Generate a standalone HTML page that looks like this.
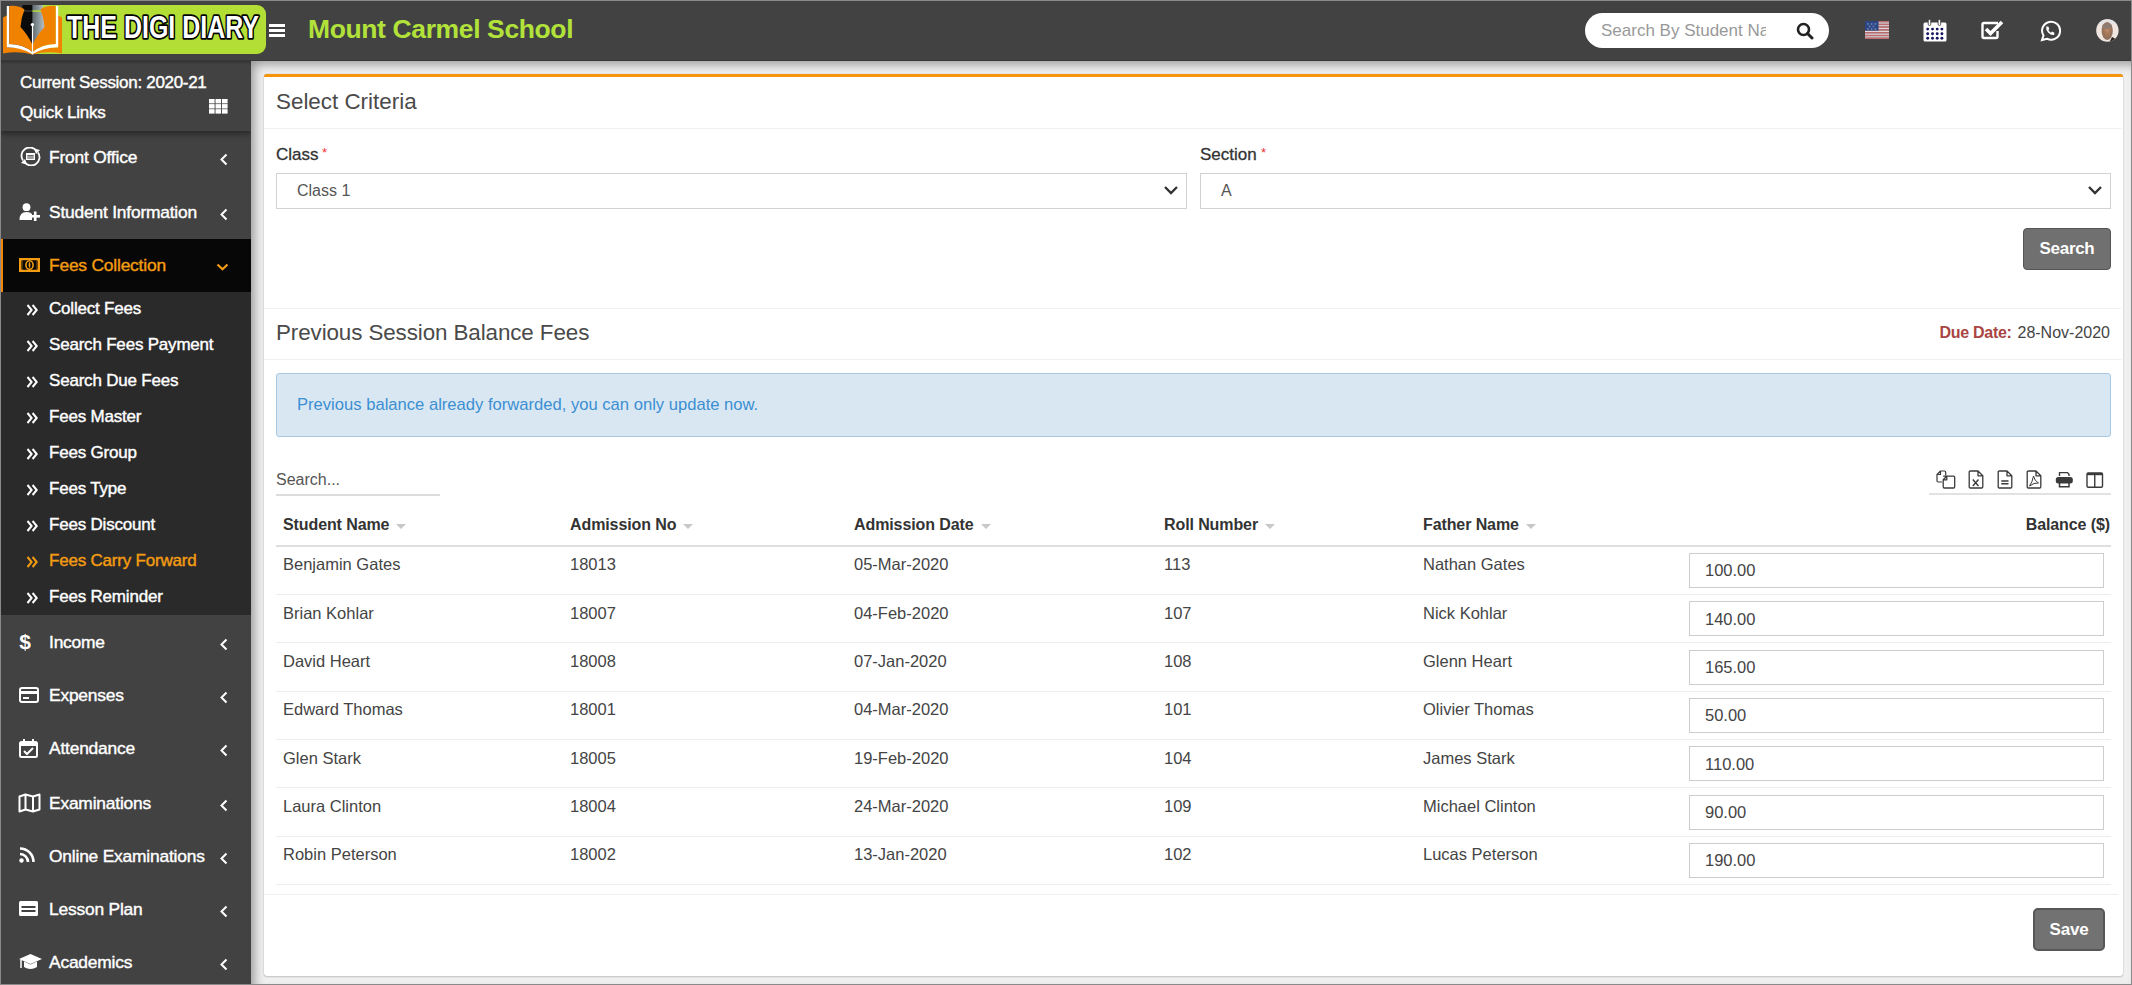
<!DOCTYPE html>
<html><head><meta charset="utf-8">
<style>
*{box-sizing:border-box;margin:0;padding:0}
html,body{width:2132px;height:985px;overflow:hidden}
body{font-family:"Liberation Sans",sans-serif;background:#f0f0f0;position:relative;color:#444}
#frame{position:absolute;left:0;top:0;width:2132px;height:985px;border:1px solid #8a8a8a;pointer-events:none;z-index:100}
#hdr{position:absolute;left:0;top:0;width:2132px;height:61px;background:#424242;border-bottom:1px solid #383838}
#side{position:absolute;left:0;top:61px;width:251px;height:924px;background:#424242;overflow:hidden}
#content{position:absolute;left:251px;top:61px;width:1881px;height:924px;background:#f0f0f0;box-shadow:inset 5px 5px 11px -2px rgba(0,0,0,.38)}
.box{position:absolute;left:264px;top:74px;width:1859px;height:902px;background:#fff;border-top:3px solid #f7960a;border-radius:3px;box-shadow:0 0 1px rgba(0,0,0,.28),0 1px 2px rgba(0,0,0,.18)}
.t{position:absolute;white-space:nowrap;line-height:1}
svg{position:absolute;display:block}
/* sidebar */
.si{position:absolute;left:0;width:251px;color:#fff;font-size:17px}
.si .lb{position:absolute;left:49px;top:50%;transform:translateY(-50%);white-space:nowrap;letter-spacing:-0.2px}
.si .chev{position:absolute;left:219px;top:50%;width:9px;height:9px;margin-top:-4px;border-left:2px solid #fff;border-bottom:2px solid #fff;transform:rotate(45deg)}
.sub{position:absolute;left:0;width:251px;color:#fff;font-size:17px}
.sub .lb{position:absolute;left:49px;top:50%;transform:translateY(-50%);white-space:nowrap;letter-spacing:-0.2px}
.sub .dc{position:absolute;left:26px;top:50%;transform:translateY(-50%);font-size:15px;font-weight:bold;letter-spacing:-2px}
/* content */
.lbl{font-size:16px;color:#333}
.req{color:#e33;font-size:12px;position:relative;top:-3px;margin-left:3px}
.sel{position:absolute;height:36px;border:1px solid #d2d6de;background:#fff}
.sel .v{position:absolute;left:20px;top:50%;transform:translateY(-50%);font-size:16px;color:#555}
.sel .ar{position:absolute;right:12px;top:50%;width:10px;height:10px;margin-top:-8px;border-right:2px solid #333;border-bottom:2px solid #333;transform:rotate(45deg)}
.btn{position:absolute;background:#6d6d6d;border:1px solid #555;border-radius:3px;color:#fff;font-size:17px;font-weight:bold;text-align:center}
.th{position:absolute;top:524px;transform:translateY(-50%);font-size:16px;font-weight:bold;color:#333;white-space:nowrap}
.th i{display:inline-block;width:0;height:0;border-left:5px solid transparent;border-right:5px solid transparent;border-top:5px solid #ccc;margin-left:6px;vertical-align:middle;position:relative;top:1px}
.td{position:absolute;transform:translateY(-50%);font-size:16px;color:#444;white-space:nowrap}
.inp{position:absolute;left:1689px;width:415px;height:36px;border:1px solid #cfcfcf;background:#fff}
.inp span{position:absolute;left:16px;top:50%;transform:translateY(-50%);font-size:16px;color:#444}
.hl{position:absolute;height:1px;background:#f0f0f0}
.sa{display:inline-block;width:0;height:0;border-left:5px solid transparent;border-right:5px solid transparent;border-top:5px solid #c8c8c8;margin-left:7px;vertical-align:middle;position:relative;top:1px}
</style></head>
<body>

<div id="hdr">
  <!-- logo -->
  <div style="position:absolute;left:33px;top:5px;width:233px;height:49px;background:#b2de36;border-radius:0 9px 9px 0"></div>
  <svg style="left:0;top:0" width="64" height="58" viewBox="0 0 64 58">
    <defs><linearGradient id="ng" x1="0" x2="1"><stop offset="0" stop-color="#5f6a6e"/><stop offset="1" stop-color="#b9c6cc"/></linearGradient></defs>
    <path d="M22.5 5 L32.5 5 L32.5 45 L20 27 Z" fill="#0b0b0b"/>
    <path d="M32.5 5 L42.5 5 L45 27 L32.5 45 Z" fill="url(#ng)"/>
    <rect x="22.5" y="10.3" width="10" height="1.3" fill="#3a3a3a"/>
    <rect x="32.5" y="10.3" width="10" height="1.5" fill="#b2de36"/>
    <path d="M3 17.5 L7.5 15 L7.5 47.5 Q21 46.5 32.3 53.5 L32.3 54.5 Q18 50.5 3 53.5 Z" fill="#f08200"/>
    <path d="M6.8 6 L9.3 6 L9.3 44 Q23 44 32.3 52 L32.3 54 Q21 47.2 6.8 47.2 Z" fill="#fff"/>
    <path d="M9.3 6 Q18.5 5 24.5 9.5 Q21 18 20.5 27 Q28 35 32.3 44.5 L32.3 52 Q23 44 9.3 44 Z" fill="#f08200"/>
    <path d="M62 17.5 L57.5 15 L57.5 47.5 Q44 46.5 32.7 53.5 L32.7 54.5 Q47 50.5 62 53.5 Z" fill="#f08200"/>
    <path d="M58.2 6 L55.7 6 L55.7 44 Q42 44 32.7 52 L32.7 54 Q44 47.2 58.2 47.2 Z" fill="#fff"/>
    <path d="M55.7 6 Q46.5 5 40.5 9.5 Q44 18 44.5 27 Q37 35 32.7 44.5 L32.7 52 Q42 44 55.7 44 Z" fill="#f08200"/>
    <rect x="31.9" y="25" width="1.2" height="29.5" fill="#fff"/>
    <circle cx="32.4" cy="24.6" r="1.7" fill="#fff"/>
  </svg>
  <svg style="left:60px;top:8px" width="206" height="40" viewBox="0 0 206 40"><text x="7" y="30" font-family="Liberation Sans" font-weight="bold" font-size="31.5" textLength="192" lengthAdjust="spacingAndGlyphs" fill="#fff" stroke="#000" stroke-width="3.6" stroke-linejoin="round" paint-order="stroke">THE DIGI DIARY</text></svg>
  <!-- hamburger -->
  <div style="position:absolute;left:269px;top:24px;width:16px;height:3px;background:#fff"></div>
  <div style="position:absolute;left:269px;top:29px;width:16px;height:3px;background:#fff"></div>
  <div style="position:absolute;left:269px;top:34px;width:16px;height:3px;background:#fff"></div>
  <div class="t" style="left:308px;top:16px;font-size:26.5px;font-weight:bold;color:#b2e23a;letter-spacing:-0.38px">Mount Carmel School</div>
  <!-- search -->
  <div style="position:absolute;left:1585px;top:13px;width:244px;height:35px;background:#fff;border-radius:18px"></div>
  <div class="t" style="left:1601px;top:22px;font-size:17px;color:#999;width:165px;overflow:hidden">Search By Student Name</div>
  <svg style="left:1796px;top:22px" width="18" height="18" viewBox="0 0 18 18"><circle cx="7.5" cy="7.5" r="5.5" fill="none" stroke="#222" stroke-width="2.6"/><path d="M11.5 11.5 L16 16" stroke="#222" stroke-width="3" stroke-linecap="round"/></svg>
  <!-- flag -->
  <svg style="left:1865px;top:21px" width="24" height="18" viewBox="0 0 24 18">
    <rect y="0.00" width="24" height="1.43" fill="#c46c72"/><rect y="1.38" width="24" height="1.43" fill="#e6d8da"/><rect y="2.77" width="24" height="1.43" fill="#c46c72"/><rect y="4.15" width="24" height="1.43" fill="#e6d8da"/><rect y="5.54" width="24" height="1.43" fill="#c46c72"/><rect y="6.92" width="24" height="1.43" fill="#e6d8da"/><rect y="8.31" width="24" height="1.43" fill="#c46c72"/><rect y="9.69" width="24" height="1.43" fill="#e6d8da"/><rect y="11.08" width="24" height="1.43" fill="#c46c72"/><rect y="12.46" width="24" height="1.43" fill="#e6d8da"/><rect y="13.85" width="24" height="1.43" fill="#c46c72"/><rect y="15.23" width="24" height="1.43" fill="#e6d8da"/><rect y="16.62" width="24" height="1.43" fill="#c46c72"/>
    <rect width="13.5" height="9.6" fill="#2c4684"/>
    <g fill="#6f83b4"><circle cx="3" cy="3" r="0.9"/><circle cx="6.7" cy="3" r="0.9"/><circle cx="10.4" cy="3" r="0.9"/><circle cx="4.8" cy="5.5" r="0.9"/><circle cx="8.5" cy="5.5" r="0.9"/><circle cx="3" cy="8" r="0.9"/><circle cx="6.7" cy="8" r="0.9"/><circle cx="10.4" cy="8" r="0.9"/></g>
  </svg>
  <!-- calendar -->
  <svg style="left:1923px;top:19px" width="24" height="23" viewBox="0 0 24 23">
    <rect x="0.5" y="3.5" width="23" height="19" rx="1.5" fill="#fff"/>
    <rect x="5.2" y="0.5" width="2.6" height="6" rx="1.3" fill="#fff" stroke="#424242" stroke-width="0.9"/>
    <rect x="15.1" y="0.5" width="2.6" height="6" rx="1.3" fill="#fff" stroke="#424242" stroke-width="0.9"/>
    <g fill="#141460"><circle cx="4.7" cy="10.1" r="1.45"/><circle cx="9.5" cy="10.1" r="1.45"/><circle cx="14.2" cy="10.1" r="1.45"/><circle cx="18.9" cy="10.1" r="1.45"/><circle cx="4.7" cy="14.7" r="1.45"/><circle cx="9.5" cy="14.7" r="1.45"/><circle cx="14.2" cy="14.7" r="1.45"/><circle cx="18.9" cy="14.7" r="1.45"/><circle cx="4.7" cy="19.2" r="1.45"/><circle cx="9.5" cy="19.2" r="1.45"/><circle cx="14.2" cy="19.2" r="1.45"/><circle cx="18.9" cy="19.2" r="1.45"/></g>
  </svg>
  <!-- check -->
  <svg style="left:1981px;top:19px" width="24" height="21" viewBox="0 0 24 21">
    <path d="M17 4 L3 4 Q1.5 4 1.5 5.5 L1.5 17.5 Q1.5 19 3 19 L15 19 Q16.5 19 16.5 17.5 L16.5 12" fill="none" stroke="#fff" stroke-width="2.4"/>
    <path d="M5 10 L9.5 14.5 L21 3" fill="none" stroke="#fff" stroke-width="3.6"/>
  </svg>
  <!-- whatsapp -->
  <svg style="left:2039px;top:20px" width="22" height="22" viewBox="0 0 22 22">
    <path d="M3 20 L4.5 15.5 A9 9 0 1 1 8 18.7 Z" fill="none" stroke="#fff" stroke-width="2"/>
    <path d="M7.2 6.5 Q6.5 9.5 9.3 12.7 Q12.5 15.8 15.2 14.8 L15.4 12.8 L13 11.6 L12 12.7 Q10.2 11.8 9.3 10 L10.4 9 L9.3 6.5 Z" fill="#fff"/>
  </svg>
  <!-- avatar -->
  <svg style="left:2095px;top:18px" width="25" height="25" viewBox="0 0 25 25">
    <defs><clipPath id="avc"><circle cx="12.4" cy="12.5" r="11.2"/></clipPath>
    <radialGradient id="avf" cx="0.5" cy="0.4" r="0.6"><stop offset="0" stop-color="#c08a68"/><stop offset="0.6" stop-color="#9c7458"/><stop offset="1" stop-color="#8a7060"/></radialGradient></defs>
    <g clip-path="url(#avc)">
      <rect width="25" height="25" fill="#f1e6df"/>
      <rect x="0" y="0" width="25" height="6" fill="#e4e4e4"/>
      <ellipse cx="12.2" cy="13" rx="5.6" ry="9" fill="url(#avf)"/>
      <ellipse cx="12.2" cy="8" rx="5" ry="3" fill="#8e7c70"/>
      <path d="M14 25 L17 19 Q21 20 22 25 Z" fill="#2e2622"/>
      <path d="M3 20 Q5 24 7 25 L2 25 Z" fill="#b8c4d8"/>
    </g>
  </svg>
</div>

<div id="side"><div style="position:absolute;left:0;top:0;width:251px;height:70px;background:#424242;box-shadow:0 3px 6px rgba(0,0,0,.4),inset 0 3px 3px -2px rgba(0,0,0,.35)"></div>
<div class="t" style="left:20px;top:12.7px;font-size:17px;color:#fff;font-weight:400;letter-spacing:-0.3px;-webkit-text-stroke:0.4px #fff">Current Session: 2020-21</div>
<div class="t" style="left:20px;top:42.7px;font-size:17px;color:#fff;font-weight:400;letter-spacing:-0.2px;-webkit-text-stroke:0.4px #fff">Quick Links</div>
<svg style="left:209px;top:38px" width="19" height="15" viewBox="0 0 19 15"><g fill="#fff"><rect x="0.0" y="0.0" width="5.6" height="4.4"/><rect x="6.5" y="0.0" width="5.6" height="4.4"/><rect x="13.0" y="0.0" width="5.6" height="4.4"/><rect x="0.0" y="5.1" width="5.6" height="4.4"/><rect x="6.5" y="5.1" width="5.6" height="4.4"/><rect x="13.0" y="5.1" width="5.6" height="4.4"/><rect x="0.0" y="10.2" width="5.6" height="4.4"/><rect x="6.5" y="10.2" width="5.6" height="4.4"/><rect x="13.0" y="10.2" width="5.6" height="4.4"/></g></svg>
<div class="t" style="left:49px;top:87.5px;font-size:17.4px;color:#fff;font-weight:400;letter-spacing:-0.2px;-webkit-text-stroke:0.4px #fff">Front Office</div><svg style="left:19px;top:86px" width="23" height="19" viewBox="0 0 23 19"><path d="M4 13.5 A7.5 7.5 0 0 1 17.5 4" fill="none" stroke="#fff" stroke-width="1.8"/><path d="M19 5.5 A7.5 7.5 0 0 1 5.5 15" fill="none" stroke="#fff" stroke-width="1.8"/><path d="M15 1.5 L21 3 L17 7 Z" fill="#fff"/><path d="M8 17.5 L2 16 L6 12 Z" fill="#fff"/><rect x="7" y="6" width="9" height="7" fill="#fff"/><rect x="8.3" y="8.2" width="6.4" height="1.3" fill="#424242"/><rect x="8.3" y="10.5" width="6.4" height="1" fill="#424242"/></svg><svg style="left:219px;top:92px" width="10" height="13" viewBox="0 0 10 13"><path d="M7.5 1.5 L2.5 6.5 L7.5 11.5" fill="none" stroke="#fff" stroke-width="2.0"/></svg>
<div class="t" style="left:49px;top:142.5px;font-size:17.4px;color:#fff;font-weight:400;letter-spacing:-0.2px;-webkit-text-stroke:0.4px #fff">Student Information</div><svg style="left:19px;top:142px" width="22" height="18" viewBox="0 0 22 18"><circle cx="7.5" cy="4.2" r="3.9" fill="#fff"/><path d="M0.5 17 Q0.5 9 7.5 9 Q11.5 9 13 11 L13 17 Z" fill="#fff"/><rect x="14.9" y="8.5" width="2.6" height="9.5" fill="#fff"/><rect x="11.4" y="12" width="9.6" height="2.6" fill="#fff"/><path d="M13.6 9.5 L13.6 18" stroke="#424242" stroke-width="0"/></svg><svg style="left:219px;top:147px" width="10" height="13" viewBox="0 0 10 13"><path d="M7.5 1.5 L2.5 6.5 L7.5 11.5" fill="none" stroke="#fff" stroke-width="2.0"/></svg>
<div style="position:absolute;left:0;top:178px;width:251px;height:53px;background:#070707;border-left:3px solid #f0850a"></div>
<div class="t" style="left:49px;top:195.5px;font-size:17.4px;color:#f39c12;font-weight:400;letter-spacing:-0.2px;-webkit-text-stroke:0.4px #f39c12">Fees Collection</div><svg style="left:19px;top:197px" width="21" height="14" viewBox="0 0 21 14"><rect x="0" y="0" width="21" height="14" fill="#f39c12"/><rect x="2.2" y="2.2" width="16.6" height="9.6" rx="1" fill="#070707"/><ellipse cx="10.5" cy="7" rx="3.6" ry="4.3" fill="none" stroke="#f39c12" stroke-width="1.6"/><ellipse cx="10.5" cy="7" rx="0.9" ry="3" fill="#f39c12"/><rect x="2.2" y="2.2" width="1.6" height="9.6" fill="#f39c12" opacity="0.35"/><rect x="17.2" y="2.2" width="1.6" height="9.6" fill="#f39c12" opacity="0.35"/></svg><svg style="left:216px;top:202px" width="13" height="8" viewBox="0 0 13 8"><path d="M1.5 1.5 L6.5 6.3 L11.5 1.5" fill="none" stroke="#f39c12" stroke-width="2.2"/></svg>
<div style="position:absolute;left:0;top:231px;width:251px;height:323px;background:#2a2a2a"></div>
<div class="t" style="left:49px;top:239.0px;font-size:17px;color:#fff;font-weight:400;letter-spacing:-0.2px;-webkit-text-stroke:0.4px #fff">Collect Fees</div>
<svg style="left:26px;top:243px" width="13" height="12" viewBox="0 0 13 12"><path d="M1.5 1 L5.6 6 L1.5 11 M6.6 1 L10.7 6 L6.6 11" fill="none" stroke="#fff" stroke-width="2"/></svg>
<div class="t" style="left:49px;top:275.0px;font-size:17px;color:#fff;font-weight:400;letter-spacing:-0.2px;-webkit-text-stroke:0.4px #fff">Search Fees Payment</div>
<svg style="left:26px;top:279px" width="13" height="12" viewBox="0 0 13 12"><path d="M1.5 1 L5.6 6 L1.5 11 M6.6 1 L10.7 6 L6.6 11" fill="none" stroke="#fff" stroke-width="2"/></svg>
<div class="t" style="left:49px;top:311.0px;font-size:17px;color:#fff;font-weight:400;letter-spacing:-0.2px;-webkit-text-stroke:0.4px #fff">Search Due Fees</div>
<svg style="left:26px;top:315px" width="13" height="12" viewBox="0 0 13 12"><path d="M1.5 1 L5.6 6 L1.5 11 M6.6 1 L10.7 6 L6.6 11" fill="none" stroke="#fff" stroke-width="2"/></svg>
<div class="t" style="left:49px;top:347.0px;font-size:17px;color:#fff;font-weight:400;letter-spacing:-0.2px;-webkit-text-stroke:0.4px #fff">Fees Master</div>
<svg style="left:26px;top:351px" width="13" height="12" viewBox="0 0 13 12"><path d="M1.5 1 L5.6 6 L1.5 11 M6.6 1 L10.7 6 L6.6 11" fill="none" stroke="#fff" stroke-width="2"/></svg>
<div class="t" style="left:49px;top:383.0px;font-size:17px;color:#fff;font-weight:400;letter-spacing:-0.2px;-webkit-text-stroke:0.4px #fff">Fees Group</div>
<svg style="left:26px;top:387px" width="13" height="12" viewBox="0 0 13 12"><path d="M1.5 1 L5.6 6 L1.5 11 M6.6 1 L10.7 6 L6.6 11" fill="none" stroke="#fff" stroke-width="2"/></svg>
<div class="t" style="left:49px;top:419.0px;font-size:17px;color:#fff;font-weight:400;letter-spacing:-0.2px;-webkit-text-stroke:0.4px #fff">Fees Type</div>
<svg style="left:26px;top:423px" width="13" height="12" viewBox="0 0 13 12"><path d="M1.5 1 L5.6 6 L1.5 11 M6.6 1 L10.7 6 L6.6 11" fill="none" stroke="#fff" stroke-width="2"/></svg>
<div class="t" style="left:49px;top:455.0px;font-size:17px;color:#fff;font-weight:400;letter-spacing:-0.2px;-webkit-text-stroke:0.4px #fff">Fees Discount</div>
<svg style="left:26px;top:459px" width="13" height="12" viewBox="0 0 13 12"><path d="M1.5 1 L5.6 6 L1.5 11 M6.6 1 L10.7 6 L6.6 11" fill="none" stroke="#fff" stroke-width="2"/></svg>
<div class="t" style="left:49px;top:491.0px;font-size:17px;color:#f39c12;font-weight:400;letter-spacing:-0.2px;-webkit-text-stroke:0.4px #f39c12">Fees Carry Forward</div>
<svg style="left:26px;top:495px" width="13" height="12" viewBox="0 0 13 12"><path d="M1.5 1 L5.6 6 L1.5 11 M6.6 1 L10.7 6 L6.6 11" fill="none" stroke="#f39c12" stroke-width="2"/></svg>
<div class="t" style="left:49px;top:527.0px;font-size:17px;color:#fff;font-weight:400;letter-spacing:-0.2px;-webkit-text-stroke:0.4px #fff">Fees Reminder</div>
<svg style="left:26px;top:531px" width="13" height="12" viewBox="0 0 13 12"><path d="M1.5 1 L5.6 6 L1.5 11 M6.6 1 L10.7 6 L6.6 11" fill="none" stroke="#fff" stroke-width="2"/></svg>
<div class="t" style="left:49px;top:572.5px;font-size:17.4px;color:#fff;font-weight:400;letter-spacing:-0.2px;-webkit-text-stroke:0.4px #fff">Income</div><svg style="left:19px;top:571px" width="12" height="20" viewBox="0 0 12 20"><text x="6" y="17" text-anchor="middle" font-family="Liberation Sans" font-weight="bold" font-size="21" fill="#fff">$</text></svg><svg style="left:219px;top:577px" width="10" height="13" viewBox="0 0 10 13"><path d="M7.5 1.5 L2.5 6.5 L7.5 11.5" fill="none" stroke="#fff" stroke-width="2.0"/></svg>
<div class="t" style="left:49px;top:625.5px;font-size:17.4px;color:#fff;font-weight:400;letter-spacing:-0.2px;-webkit-text-stroke:0.4px #fff">Expenses</div><svg style="left:19px;top:626px" width="20" height="16" viewBox="0 0 20 16"><rect x="1" y="1" width="18" height="14" rx="2" fill="none" stroke="#fff" stroke-width="2"/><rect x="1" y="4" width="18" height="3" fill="#fff"/><rect x="4" y="10" width="6" height="2" fill="#fff"/></svg><svg style="left:219px;top:630px" width="10" height="13" viewBox="0 0 10 13"><path d="M7.5 1.5 L2.5 6.5 L7.5 11.5" fill="none" stroke="#fff" stroke-width="2.0"/></svg>
<div class="t" style="left:49px;top:678.5px;font-size:17.4px;color:#fff;font-weight:400;letter-spacing:-0.2px;-webkit-text-stroke:0.4px #fff">Attendance</div><svg style="left:19px;top:678px" width="19" height="19" viewBox="0 0 19 19"><rect x="1" y="3" width="17" height="15" rx="1.5" fill="none" stroke="#fff" stroke-width="2"/><rect x="1" y="3" width="17" height="4" fill="#fff"/><rect x="4" y="0" width="2" height="5" fill="#fff"/><rect x="13" y="0" width="2" height="5" fill="#fff"/><path d="M5 12 L8 15 L14 9" fill="none" stroke="#fff" stroke-width="2"/></svg><svg style="left:219px;top:683px" width="10" height="13" viewBox="0 0 10 13"><path d="M7.5 1.5 L2.5 6.5 L7.5 11.5" fill="none" stroke="#fff" stroke-width="2.0"/></svg>
<div class="t" style="left:49px;top:733.5px;font-size:17.4px;color:#fff;font-weight:400;letter-spacing:-0.2px;-webkit-text-stroke:0.4px #fff">Examinations</div><svg style="left:18px;top:732px" width="23" height="20" viewBox="0 0 23 20"><path d="M1.5 3.5 L7.5 1.5 L15 3.5 L21.5 1.5 L21.5 16.5 L15 18.5 L7.5 16.5 L1.5 18.5 Z" fill="none" stroke="#fff" stroke-width="2" stroke-linejoin="round"/><path d="M7.5 1.5 L7.5 16.5 M15 3.5 L15 18.5" stroke="#fff" stroke-width="2"/></svg><svg style="left:219px;top:738px" width="10" height="13" viewBox="0 0 10 13"><path d="M7.5 1.5 L2.5 6.5 L7.5 11.5" fill="none" stroke="#fff" stroke-width="2.0"/></svg>
<div class="t" style="left:49px;top:786.5px;font-size:17.4px;color:#fff;font-weight:400;letter-spacing:-0.2px;-webkit-text-stroke:0.4px #fff">Online Examinations</div><svg style="left:19px;top:786px" width="16" height="16" viewBox="0 0 16 16"><circle cx="2.5" cy="13.5" r="2.2" fill="#fff"/><path d="M1 7 A8 8 0 0 1 9 15" fill="none" stroke="#fff" stroke-width="2.6"/><path d="M1 1.5 A13.5 13.5 0 0 1 14.5 15" fill="none" stroke="#fff" stroke-width="2.6"/></svg><svg style="left:219px;top:791px" width="10" height="13" viewBox="0 0 10 13"><path d="M7.5 1.5 L2.5 6.5 L7.5 11.5" fill="none" stroke="#fff" stroke-width="2.0"/></svg>
<div class="t" style="left:49px;top:839.5px;font-size:17.4px;color:#fff;font-weight:400;letter-spacing:-0.2px;-webkit-text-stroke:0.4px #fff">Lesson Plan</div><svg style="left:19px;top:840px" width="19" height="15" viewBox="0 0 19 15"><rect x="0" y="0" width="19" height="15" rx="1.5" fill="#fff"/><rect x="2.5" y="5" width="14" height="2" fill="#424242"/><rect x="2.5" y="9" width="14" height="2" fill="#424242"/></svg><svg style="left:219px;top:844px" width="10" height="13" viewBox="0 0 10 13"><path d="M7.5 1.5 L2.5 6.5 L7.5 11.5" fill="none" stroke="#fff" stroke-width="2.0"/></svg>
<div class="t" style="left:49px;top:892.5px;font-size:17.4px;color:#fff;font-weight:400;letter-spacing:-0.2px;-webkit-text-stroke:0.4px #fff">Academics</div><svg style="left:18px;top:892px" width="25" height="18" viewBox="0 0 25 18"><path d="M1 6 L12.5 1 L24 6 L12.5 11 Z" fill="#fff"/><path d="M6 8.5 L6 14 Q12.5 18 19 14 L19 8.5 L12.5 11.5 Z" fill="#fff"/><path d="M3 6.5 L3 15" stroke="#fff" stroke-width="1.5"/></svg><svg style="left:219px;top:897px" width="10" height="13" viewBox="0 0 10 13"><path d="M7.5 1.5 L2.5 6.5 L7.5 11.5" fill="none" stroke="#fff" stroke-width="2.0"/></svg></div>
<div id="content"></div>
<div class="box"></div>
<div id="main"><div class="t" style="left:276px;top:90.7px;font-size:22.4px;color:#4a4a4a;font-weight:400;letter-spacing:0px">Select Criteria</div>
<div class="hl" style="left:264px;top:128px;width:1858px;background:#f2f2f2"></div>
<div class="t" style="left:276px;top:145.7px;font-size:17px;color:#333;font-weight:400;-webkit-text-stroke:0.3px #333">Class</div>
<div class="t" style="left:322px;top:146px;font-size:13px;color:#e33">*</div>
<div class="t" style="left:1200px;top:145.7px;font-size:17px;color:#333;font-weight:400;-webkit-text-stroke:0.3px #333">Section</div>
<div class="t" style="left:1261px;top:146px;font-size:13px;color:#e33">*</div>
<div style="position:absolute;left:276px;top:173px;width:911px;height:36px;border:1px solid #d2d2d2;background:#fff"></div><div class="t" style="left:297px;top:182.7px;font-size:16px;color:#555;font-weight:400;">Class 1</div><svg style="left:1163px;top:185px" width="16" height="10" viewBox="0 0 16 10"><path d="M2 2 L8 8 L14 2" fill="none" stroke="#333" stroke-width="2.4"/></svg>
<div style="position:absolute;left:1200px;top:173px;width:911px;height:36px;border:1px solid #d2d2d2;background:#fff"></div><div class="t" style="left:1221px;top:182.7px;font-size:16px;color:#555;font-weight:400;">A</div><svg style="left:2087px;top:185px" width="16" height="10" viewBox="0 0 16 10"><path d="M2 2 L8 8 L14 2" fill="none" stroke="#333" stroke-width="2.4"/></svg>
<div style="position:absolute;left:2023px;top:228px;width:88px;height:42px;background:#707070;border:1px solid #555;border-radius:4px"></div>
<div class="t" style="left:2067px;top:240.2px;font-size:17px;color:#fff;font-weight:700;transform:translateX(-50%);letter-spacing:-0.3px">Search</div>
<div class="hl" style="left:264px;top:308px;width:1858px;background:#f2f2f2"></div>
<div class="t" style="left:276px;top:321.7px;font-size:22.4px;color:#4a4a4a;font-weight:400;letter-spacing:-0.1px">Previous Session Balance Fees</div>
<div class="t" style="right:22px;top:324.7px;font-size:16px;color:#444;font-weight:400;"><span style="color:#a94442;font-weight:bold;letter-spacing:-0.3px;margin-right:1.5px">Due Date:</span> 28-Nov-2020</div>
<div class="hl" style="left:264px;top:359px;width:1858px;background:#f2f2f2"></div>
<div style="position:absolute;left:276px;top:373px;width:1835px;height:64px;background:#d9e7f2;border:1px solid #a8c9e3;border-radius:3px"></div>
<div class="t" style="left:297px;top:396.9px;font-size:16.6px;color:#3b8fd2;font-weight:400;">Previous balance already forwarded, you can only update now.</div>
<div class="t" style="left:276px;top:471.7px;font-size:16px;color:#555;font-weight:400;">Search...</div>
<div style="position:absolute;left:276px;top:494px;width:164px;height:2px;background:#dcdcdc"></div>
<div style="position:absolute;left:1929px;top:493px;width:182px;height:2px;background:#e2e2e2"></div>
<svg style="left:1936px;top:470px" width="20" height="19" viewBox="0 0 20 19"><path d="M6 12 L2.2 12 Q1 12 1 10.8 L1 4.5 L4.5 1 L8.5 1 Q9.7 1 9.7 2.2 L9.7 5.5 M4.5 1 L4.5 4.5 L1 4.5" fill="none" stroke="#3a3a3a" stroke-width="1.2" stroke-linejoin="round"/><path d="M7.2 6.2 L11.5 6.2 L17.5 6.2 Q18.7 6.2 18.7 7.4 L18.7 16.8 Q18.7 18 17.5 18 L8.4 18 Q7.2 18 7.2 16.8 L7.2 9.8 L10.8 6.2 M10.8 6.2 L10.8 9.8 L7.2 9.8" fill="none" stroke="#3a3a3a" stroke-width="1.3" stroke-linejoin="round"/></svg>
<svg style="left:1968px;top:470px" width="20" height="19" viewBox="0 0 20 19"><path d="M1.2 2.2 Q1.2 1 2.4 1 L10 1 L14.8 5.8 L14.8 16.8 Q14.8 18 13.6 18 L2.4 18 Q1.2 18 1.2 16.8 Z M10 1 L10 5.8 L14.8 5.8" fill="none" stroke="#3a3a3a" stroke-width="1.3" stroke-linejoin="round"/><path d="M4.8 9.5 L10.5 16 M10.5 9.5 L4.8 16" stroke="#3a3a3a" stroke-width="1.4"/></svg>
<svg style="left:1997px;top:470px" width="20" height="19" viewBox="0 0 20 19"><path d="M1.2 2.2 Q1.2 1 2.4 1 L10 1 L14.8 5.8 L14.8 16.8 Q14.8 18 13.6 18 L2.4 18 Q1.2 18 1.2 16.8 Z M10 1 L10 5.8 L14.8 5.8" fill="none" stroke="#3a3a3a" stroke-width="1.3" stroke-linejoin="round"/><path d="M4.3 11 L11.5 11 M4.3 13.8 L11.5 13.8" stroke="#3a3a3a" stroke-width="1.5"/></svg>
<svg style="left:2026px;top:470px" width="20" height="19" viewBox="0 0 20 19"><path d="M1.2 2.2 Q1.2 1 2.4 1 L10 1 L14.8 5.8 L14.8 16.8 Q14.8 18 13.6 18 L2.4 18 Q1.2 18 1.2 16.8 Z M10 1 L10 5.8 L14.8 5.8" fill="none" stroke="#3a3a3a" stroke-width="1.3" stroke-linejoin="round"/><path d="M3.5 16 Q6.5 12 7.5 6 Q8.5 11 12.5 13 Q8 12.5 3.5 16 Z" fill="none" stroke="#3a3a3a" stroke-width="1"/></svg>
<svg style="left:2055px;top:471px" width="20" height="19" viewBox="0 0 20 19"><path d="M4.5 5 L4.5 1.6 L12.5 1.6 L14 3.2 L14 5" fill="none" stroke="#3a3a3a" stroke-width="1.4"/><rect x="0.8" y="6" width="17" height="6.5" rx="2.5" fill="#3a3a3a"/><path d="M4.5 11 L4.5 15.8 L14 15.8 L14 11" fill="none" stroke="#3a3a3a" stroke-width="1.5"/></svg>
<svg style="left:2086px;top:472px" width="20" height="19" viewBox="0 0 20 19"><rect x="1" y="1" width="15.5" height="14.2" rx="1.2" fill="none" stroke="#3a3a3a" stroke-width="1.4"/><rect x="1" y="1" width="15.5" height="2.2" fill="#3a3a3a"/><path d="M8.75 2 L8.75 15" stroke="#3a3a3a" stroke-width="1.4"/></svg>
<div class="t" style="left:283px;top:516.7px;font-size:16px;color:#333;font-weight:700;letter-spacing:-0.1px">Student Name<i class="sa"></i></div>
<div class="t" style="left:570px;top:516.7px;font-size:16px;color:#333;font-weight:700;letter-spacing:-0.1px">Admission No<i class="sa"></i></div>
<div class="t" style="left:854px;top:516.7px;font-size:16px;color:#333;font-weight:700;letter-spacing:-0.1px">Admission Date<i class="sa"></i></div>
<div class="t" style="left:1164px;top:516.7px;font-size:16px;color:#333;font-weight:700;letter-spacing:-0.1px">Roll Number<i class="sa"></i></div>
<div class="t" style="left:1423px;top:516.7px;font-size:16px;color:#333;font-weight:700;letter-spacing:-0.1px">Father Name<i class="sa"></i></div>
<div class="t" style="right:22px;top:516.7px;font-size:16px;color:#333;font-weight:700;letter-spacing:-0.1px">Balance ($)</div>
<div style="position:absolute;left:276px;top:545px;width:1835px;height:2px;background:#dedede"></div>
<div class="t" style="left:283px;top:556.4px;font-size:16.5px;color:#444;font-weight:400;">Benjamin Gates</div>
<div class="t" style="left:570px;top:556.4px;font-size:16.5px;color:#444;font-weight:400;">18013</div>
<div class="t" style="left:854px;top:556.4px;font-size:16.5px;color:#444;font-weight:400;">05-Mar-2020</div>
<div class="t" style="left:1164px;top:556.4px;font-size:16.5px;color:#444;font-weight:400;">113</div>
<div class="t" style="left:1423px;top:556.4px;font-size:16.5px;color:#444;font-weight:400;">Nathan Gates</div>
<div style="position:absolute;left:1689px;top:553.0px;width:415px;height:35px;border:1px solid #cdcdcd;background:#fff"></div>
<div class="t" style="left:1705px;top:562.4px;font-size:16.5px;color:#444;font-weight:400;">100.00</div>
<div class="hl" style="left:276px;top:593.8px;width:1835px;background:#ececec"></div>
<div class="t" style="left:283px;top:604.8px;font-size:16.5px;color:#444;font-weight:400;">Brian Kohlar</div>
<div class="t" style="left:570px;top:604.8px;font-size:16.5px;color:#444;font-weight:400;">18007</div>
<div class="t" style="left:854px;top:604.8px;font-size:16.5px;color:#444;font-weight:400;">04-Feb-2020</div>
<div class="t" style="left:1164px;top:604.8px;font-size:16.5px;color:#444;font-weight:400;">107</div>
<div class="t" style="left:1423px;top:604.8px;font-size:16.5px;color:#444;font-weight:400;">Nick Kohlar</div>
<div style="position:absolute;left:1689px;top:601.3px;width:415px;height:35px;border:1px solid #cdcdcd;background:#fff"></div>
<div class="t" style="left:1705px;top:610.8px;font-size:16.5px;color:#444;font-weight:400;">140.00</div>
<div class="hl" style="left:276px;top:642.2px;width:1835px;background:#ececec"></div>
<div class="t" style="left:283px;top:653.1px;font-size:16.5px;color:#444;font-weight:400;">David Heart</div>
<div class="t" style="left:570px;top:653.1px;font-size:16.5px;color:#444;font-weight:400;">18008</div>
<div class="t" style="left:854px;top:653.1px;font-size:16.5px;color:#444;font-weight:400;">07-Jan-2020</div>
<div class="t" style="left:1164px;top:653.1px;font-size:16.5px;color:#444;font-weight:400;">108</div>
<div class="t" style="left:1423px;top:653.1px;font-size:16.5px;color:#444;font-weight:400;">Glenn Heart</div>
<div style="position:absolute;left:1689px;top:649.7px;width:415px;height:35px;border:1px solid #cdcdcd;background:#fff"></div>
<div class="t" style="left:1705px;top:659.1px;font-size:16.5px;color:#444;font-weight:400;">165.00</div>
<div class="hl" style="left:276px;top:690.5px;width:1835px;background:#ececec"></div>
<div class="t" style="left:283px;top:701.4px;font-size:16.5px;color:#444;font-weight:400;">Edward Thomas</div>
<div class="t" style="left:570px;top:701.4px;font-size:16.5px;color:#444;font-weight:400;">18001</div>
<div class="t" style="left:854px;top:701.4px;font-size:16.5px;color:#444;font-weight:400;">04-Mar-2020</div>
<div class="t" style="left:1164px;top:701.4px;font-size:16.5px;color:#444;font-weight:400;">101</div>
<div class="t" style="left:1423px;top:701.4px;font-size:16.5px;color:#444;font-weight:400;">Olivier Thomas</div>
<div style="position:absolute;left:1689px;top:698.0px;width:415px;height:35px;border:1px solid #cdcdcd;background:#fff"></div>
<div class="t" style="left:1705px;top:707.4px;font-size:16.5px;color:#444;font-weight:400;">50.00</div>
<div class="hl" style="left:276px;top:738.8px;width:1835px;background:#ececec"></div>
<div class="t" style="left:283px;top:749.8px;font-size:16.5px;color:#444;font-weight:400;">Glen Stark</div>
<div class="t" style="left:570px;top:749.8px;font-size:16.5px;color:#444;font-weight:400;">18005</div>
<div class="t" style="left:854px;top:749.8px;font-size:16.5px;color:#444;font-weight:400;">19-Feb-2020</div>
<div class="t" style="left:1164px;top:749.8px;font-size:16.5px;color:#444;font-weight:400;">104</div>
<div class="t" style="left:1423px;top:749.8px;font-size:16.5px;color:#444;font-weight:400;">James Stark</div>
<div style="position:absolute;left:1689px;top:746.3px;width:415px;height:35px;border:1px solid #cdcdcd;background:#fff"></div>
<div class="t" style="left:1705px;top:755.8px;font-size:16.5px;color:#444;font-weight:400;">110.00</div>
<div class="hl" style="left:276px;top:787.1px;width:1835px;background:#ececec"></div>
<div class="t" style="left:283px;top:798.1px;font-size:16.5px;color:#444;font-weight:400;">Laura Clinton</div>
<div class="t" style="left:570px;top:798.1px;font-size:16.5px;color:#444;font-weight:400;">18004</div>
<div class="t" style="left:854px;top:798.1px;font-size:16.5px;color:#444;font-weight:400;">24-Mar-2020</div>
<div class="t" style="left:1164px;top:798.1px;font-size:16.5px;color:#444;font-weight:400;">109</div>
<div class="t" style="left:1423px;top:798.1px;font-size:16.5px;color:#444;font-weight:400;">Michael Clinton</div>
<div style="position:absolute;left:1689px;top:794.6px;width:415px;height:35px;border:1px solid #cdcdcd;background:#fff"></div>
<div class="t" style="left:1705px;top:804.1px;font-size:16.5px;color:#444;font-weight:400;">90.00</div>
<div class="hl" style="left:276px;top:835.5px;width:1835px;background:#ececec"></div>
<div class="t" style="left:283px;top:846.4px;font-size:16.5px;color:#444;font-weight:400;">Robin Peterson</div>
<div class="t" style="left:570px;top:846.4px;font-size:16.5px;color:#444;font-weight:400;">18002</div>
<div class="t" style="left:854px;top:846.4px;font-size:16.5px;color:#444;font-weight:400;">13-Jan-2020</div>
<div class="t" style="left:1164px;top:846.4px;font-size:16.5px;color:#444;font-weight:400;">102</div>
<div class="t" style="left:1423px;top:846.4px;font-size:16.5px;color:#444;font-weight:400;">Lucas Peterson</div>
<div style="position:absolute;left:1689px;top:843.0px;width:415px;height:35px;border:1px solid #cdcdcd;background:#fff"></div>
<div class="t" style="left:1705px;top:852.4px;font-size:16.5px;color:#444;font-weight:400;">190.00</div>
<div class="hl" style="left:276px;top:883.8px;width:1835px;background:#ececec"></div>
<div class="hl" style="left:264px;top:894px;width:1854px;background:#efefef"></div>
<div style="position:absolute;left:2033px;top:908px;width:72px;height:43px;background:#727272;border:2px solid #575757;border-radius:5px"></div>
<div class="t" style="left:2069px;top:921.2px;font-size:17px;color:#fff;font-weight:700;transform:translateX(-50%);letter-spacing:-0.2px">Save</div></div>
<div id="frame"></div>
</body></html>
